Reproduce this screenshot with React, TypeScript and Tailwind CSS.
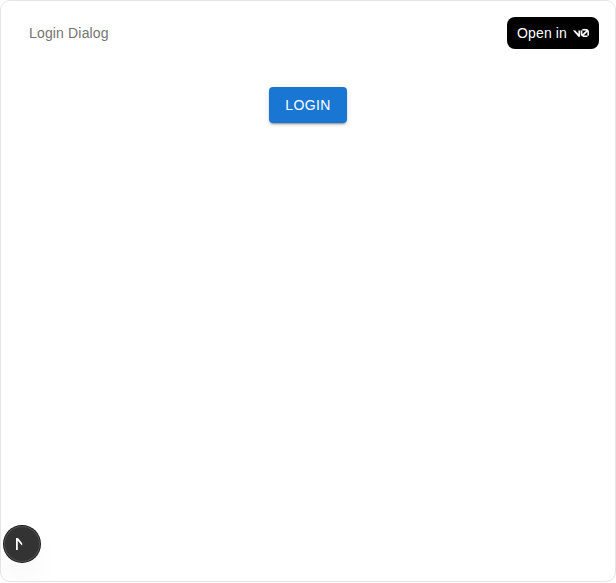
function V0Logo() {
  return (
    <svg viewBox="0 0 40 20" fill="currentColor" stroke="currentColor" strokeWidth="0.3" className="h-4 w-4" aria-hidden="true">
      <path d="M23.3919 0H32.9188C36.7819 0 39.9136 3.13165 39.9136 6.99475V16.0805H36.0006V6.99475C36.0006 6.90167 35.9969 6.80925 35.9898 6.71766L26.4628 16.079C26.4949 16.08 26.5272 16.0805 26.5595 16.0805H36.0006V19.7762H26.5595C22.6964 19.7762 19.4788 16.6139 19.4788 12.7508V3.68923H23.3919V12.7508C23.3919 12.9253 23.4054 13.0977 23.4316 13.2668L33.1682 3.6995C33.0861 3.6927 33.003 3.68923 32.9188 3.68923H23.3919V0Z" />
      <path d="M13.7688 19.0956L0 3.68759H5.53933L13.6231 12.7337V3.68759H17.7535V17.5746C17.7535 19.6705 15.1654 20.6584 13.7688 19.0956Z" />
    </svg>
  );
}

function DevBadge() {
  return (
    <button
      aria-label="Developer tools"
      className="absolute bottom-[19px] left-[3px] flex h-9 w-9 rounded-full bg-[#333] shadow-[0_0_0_1px_#171717,inset_0_0_0_1px_#505050,0_16px_32px_-8px_rgba(0,0,0,0.12)]"
    >
      <svg viewBox="0 0 36 36" fill="white" className="h-9 w-9" aria-hidden="true">
        <path d="M12 12H14L18.2 17.3V19.5L17.2 18.8L13.8 14.8V24H12Z" />
      </svg>
    </button>
  );
}

export default function App() {
  return (
    <div className="h-[583px] bg-white font-['Liberation_Sans',Arial,sans-serif]">
      <main className="relative flex h-[582px] flex-col overflow-hidden rounded-[10px] border border-[#e5e5e5] p-4">
        <header className="flex h-8 items-center justify-between">
          <h2 className="pl-3 text-sm tracking-[0.16px] text-[#737373]">Login Dialog</h2>
          <button className="flex h-8 w-[92px] items-center justify-between rounded-lg bg-black pr-2.5 pl-2.5 text-sm tracking-[0.14px] text-white">
            Open in
            <V0Logo />
          </button>
        </header>
        <div className="flex justify-center pt-[38px]">
          <button className="h-9 w-[78px] rounded bg-[#1976d2] text-sm tracking-[0.4px] text-white shadow-[0_3px_1px_-2px_rgba(0,0,0,0.2),0_2px_2px_0_rgba(0,0,0,0.14),0_1px_5px_0_rgba(0,0,0,0.12)]">
            LOGIN
          </button>
        </div>
        <DevBadge />
      </main>
    </div>
  );
}
